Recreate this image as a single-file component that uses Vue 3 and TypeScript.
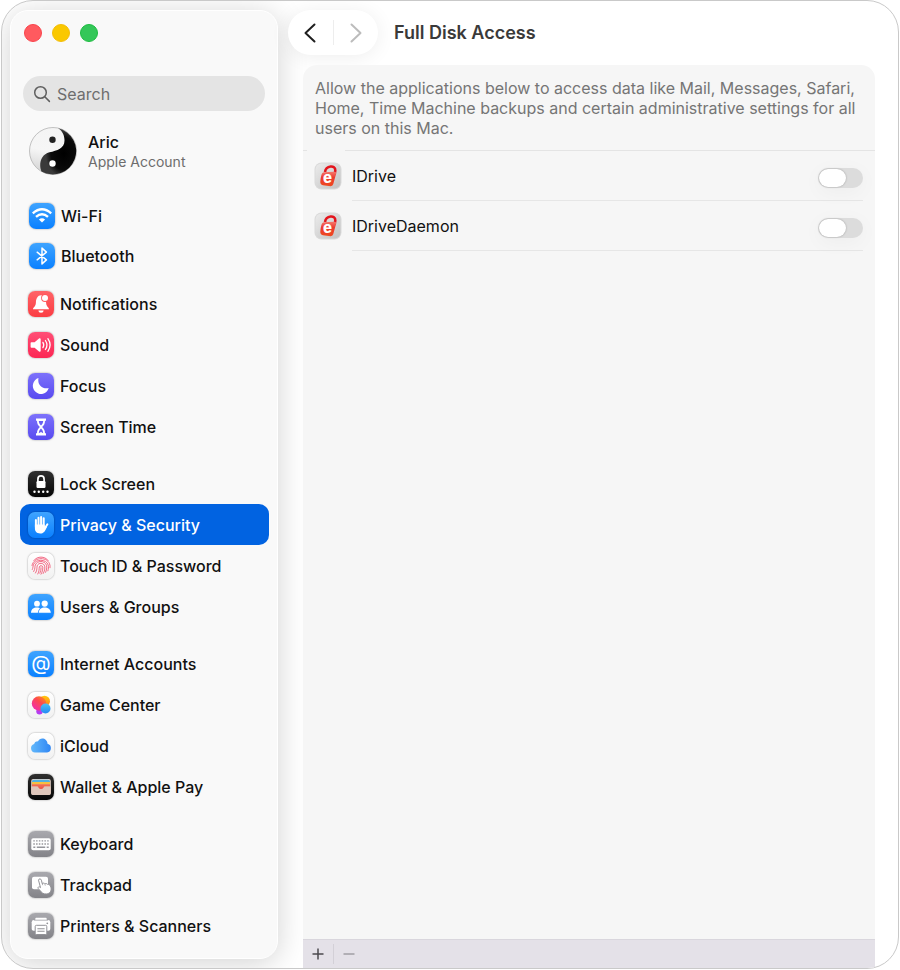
<script setup lang="ts">
import { ref } from 'vue'

interface NavItem {
  label: string
  icon: string
  tone: string
}

interface AppAccess {
  id: string
  name: string
  enabled: boolean
}

const glyphs: Record<string, string> = {
  wifi: `<g fill="none" stroke="#fff" stroke-width="2.4"><path d="M3.8 10.4Q13 2.2 22.2 10.4"/><path d="M7 13.8Q13 8.6 19 13.8"/></g><path d="M9.9 16.4Q13 14 16.1 16.4L13 19.6Z" fill="#fff"/>`,
  bluetooth: `<path d="M8.2 9.2L17.4 16.9L13 20.9V5.1L17.4 9.1L8.2 16.8" fill="none" stroke="#fff" stroke-width="1.5" stroke-linejoin="round" stroke-linecap="round"/>`,
  bell: `<path d="M5 18.3c-.3-1.700 2.700-2.500 2.900-6.600C8 7.500 9.800 4.300 13 4.300s5 3.200 5.100 7.400c.2 4.100 3.200 4.900 2.900 6.600z" fill="#fff"/><path d="M10.400 19.500h5.200a2.600 2.200 0 0 1-5.200 0z" fill="#fff"/><circle cx="17" cy="7" r="3.900" fill="#ff5a5c"/><circle cx="17" cy="7" r="3" fill="#fff"/>`,
  sound: `<path d="M3.400 10.200h3.200L11 6.600c.9-.7 1.700-.4 1.700.6v11.600c0 1-.8 1.300-1.700.6l-4.400-3.600H3.400c-.5 0-.8-.3-.8-.8v-4c0-.5.3-.8.8-.8z" fill="#fff"/><g fill="none" stroke="#fff" stroke-width="1.3" stroke-linecap="round"><path d="M14.900 10.400q1.700 2.600 0 5.200"/><path d="M17.400 8.500q3.100 4.500 0 9"/><path d="M19.900 6.700q4.400 6.300 0 12.600"/></g>`,
  moon: `<path d="M10.500 5.100c-1.300 6.200 3.200 11.200 10.200 10a8.100 8.100 0 1 1-10.200-10z" fill="#fff"/>`,
  hourglass: `<path d="M8 4.600h10v2.100h-1c0 3-1.100 4.600-2.900 6.300 1.800 1.700 2.900 3.300 2.900 6.300h1v2.100H8v-2.100h1c0-3 1.100-4.600 2.900-6.300C10.100 11.300 9 9.700 9 6.700H8z" fill="#fff"/><path d="M10.800 7h4.400c-.1 2-.8 3.200-2.200 4.500C11.600 10.200 10.900 9 10.800 7zM10.800 19.200c.1-2 .8-3.400 2.200-4.700 1.400 1.300 2.100 2.700 2.200 4.700l-2.200-1.300z" fill="#6a5ff2"/>`,
  lock: `<path d="M9.900 11V8.200a3.100 3.300 0 0 1 6.200 0V11" fill="none" stroke="#fff" stroke-width="1.700"/><rect x="8.500" y="10" width="9" height="7" rx="1.200" fill="#fff"/><g fill="#fff"><circle cx="6.500" cy="20.700" r="1.200"/><circle cx="10.800" cy="20.700" r="1.200"/><circle cx="15.200" cy="20.700" r="1.200"/><circle cx="19.500" cy="20.700" r="1.200"/></g>`,
  hand: `<g fill="none" stroke="#fff" stroke-width="2" stroke-linecap="round"><path d="M7.900 8.100v7M10.500 5.700v9M13.100 4.900v9M15.700 6.300v9M19.400 12.300l-2.900 4.500"/></g><path d="M6.900 12.500h9.800v2.400l1.600-1.200.6 1.200c-1.800 4.200-3.300 6.600-6.700 6.600-3.500 0-5.300-2-5.300-5.200z" fill="#fff"/>`,
  fingerprint: `<g fill="none" stroke="#f25b78" stroke-width=".9" stroke-linecap="round"><path d="M5.800 7.500C9.400 2.900 16.600 2.900 20.200 7.500M4 12.500C5.500 3.300 20.500 3.300 22 12.500v2.200M4.300 16.500c.8-1.700.6-3.200 1.100-4.700C7.400 5.800 18.300 5.700 20.200 12c.5 2 .3 4-.3 5.800M5.700 18.500c1.800-3 .9-4.700 1.600-6.500 1.700-4.700 9.600-4.700 11.200.3.600 2.500 0 5-.9 7M7.500 20c2.100-3.300 1.100-5.300 1.700-7.200 1.300-3.500 6.500-3.200 7.500.4.500 2.500-.2 5-1.500 7.300M9.800 21c1.600-2.800 1.200-5 1.500-7 .6-1.900 3.100-1.700 3.500.2.200 2.400-.6 4.900-1.800 7"/><path d="M13 14.700c.1 2-.3 3.700-1.200 5.400"/></g>`,
  users: `<circle cx="9" cy="9.700" r="2.900" fill="#fff"/><path d="M3 18.700c0-3.400 2.600-5.200 5.800-5.200s5.200 1.900 5.200 5.200z" fill="#fff"/><circle cx="16.700" cy="9.600" r="3.900" fill="#329dff"/><path d="M9.800 19.500c.2-4.600 3-7 6.900-7s6.800 2.600 6.900 7z" fill="#268fff"/><circle cx="16.700" cy="9.600" r="3.100" fill="#fff"/><path d="M10.700 18.700c.2-3.400 2.800-5.200 6-5.200s5.800 1.800 6.100 5.200z" fill="#fff"/>`,
  at: `<text x="13" y="19" text-anchor="middle" font-family="Inter, sans-serif" font-size="20" font-weight="400" fill="#fff">@</text>`,
  game: `<defs><linearGradient id="gc-a" x1="1" y1="0" x2="0.2" y2="1"><stop offset="0" stop-color="#ff9a10"/><stop offset="0.45" stop-color="#fd4a4e"/><stop offset="1" stop-color="#f02bb4"/></linearGradient><linearGradient id="gc-b" x1="0" y1="0" x2="0" y2="1"><stop offset="0" stop-color="#ffc90e"/><stop offset="1" stop-color="#ff7a1c"/></linearGradient><linearGradient id="gc-c" x1="0" y1="0" x2="0" y2="1"><stop offset="0" stop-color="#4bc0f2"/><stop offset="1" stop-color="#2488f5"/></linearGradient></defs><circle cx="16.500" cy="9.200" r="5.500" fill="url(#gc-b)"/><circle cx="11.500" cy="19.200" r="3.200" fill="#b43cf0"/><circle cx="11" cy="11.500" r="7.200" fill="url(#gc-a)"/><circle cx="17.500" cy="16.500" r="5" fill="url(#gc-c)"/>`,
  cloud: `<defs><linearGradient id="ic-a" x1="0" y1="0" x2="1" y2="0"><stop offset="0" stop-color="#62b8fb"/><stop offset="1" stop-color="#2f86f4"/></linearGradient></defs><path d="M7 19.500a4.300 4.300 0 0 1-.9-8.400 3.500 3.500 0 0 1 3.800-2.700c2.200-5 9.500-3.300 9.600 2.300a4.500 4.500 0 0 1-.4 8.800z" fill="url(#ic-a)"/>`,
  wallet: `<rect x="3.200" y="5" width="19.600" height="16" rx="2" fill="#e6d3c9"/><path d="M4 8V7.400a1.600 1.600 0 0 1 1.600-1.600h14.800A1.600 1.600 0 0 1 22 7.400V8z" fill="#4fb0e0"/><path d="M4 7.900h18v2.600H4z" fill="#f6bf3f"/><path d="M4 10.200h18v2.600H4z" fill="#f06a50"/><path d="M3.200 12.400h6.300c.8 0 1 .3 1.500 1 1.100 1.400 2.900 1.400 4 0 .5-.7.700-1 1.500-1h6.300V19a2 2 0 0 1-2 2H5.200a2 2 0 0 1-2-2z" fill="#ddc5ba"/><path d="M9.500 12.200h7l-1.700 2.200q-1.800 1.300-3.600 0z" fill="#ed5d4b"/>`,
  keyboard: `<rect x="3.300" y="7.200" width="19.400" height="12" rx="1.800" fill="#fff"/><g fill="none" stroke="#96969b" stroke-width="1.4"><path d="M5.300 9.900h15.400M5.300 13h15.400" stroke-dasharray="1.5 1.28"/><path d="M5.300 16.200h2M8.800 16.200h8.400M18.700 16.200h2"/></g>`,
  trackpad: `<rect x="4" y="4.800" width="16" height="12.400" rx="2" fill="#fff"/><path d="M10.500 8.200c.2-1.800 2.500-1.700 2.900 0l.8 3.300c1.700-.8 2.300-.3 2.600.2 1.400-.4 2.200 0 2.600.6 1.800-.2 3 .9 3.500 3.100.9 3.700-1 6.100-4.200 6.500-3.200.4-5-1-6.800-3.600-1-1.300-2.300-1.800-1.800-2.900.5-1 1.700-.6 2.400.2z" fill="#fff" stroke="#929297" stroke-width="1"/><path d="M14.200 11.400l.5 1.800M16.900 12l.4 1.600" stroke="#929297" stroke-width=".7"/>`,
  printer: `<path d="M7.300 8V5.800c0-.6.500-1.100 1.100-1.100h9.200c.6 0 1.100.5 1.100 1.100V8" fill="#fff"/><path d="M6 7h14a2.300 2.300 0 0 1 2.300 2.300v6.500c0 1.200-.8 1.900-2 1.900H5.700c-1.200 0-2-.7-2-1.900V9.300A2.300 2.300 0 0 1 6 7z" fill="#fff"/><path d="M6 7.200h14" stroke="#a1a1a6" stroke-width=".8"/><circle cx="19.300" cy="10.300" r=".9" fill="#929297"/><rect x="7.200" y="12.300" width="11.600" height="9.200" rx="1.200" fill="#fff" stroke="#929297" stroke-width="1"/><path d="M9.400 15.700h7.200M9.400 18.200h7.200" stroke="#929297" stroke-width="1.1"/>`,
}

const groups: NavItem[][] = [
  [
    { label: 'Wi-Fi', icon: 'wifi', tone: 'blue' },
    { label: 'Bluetooth', icon: 'bluetooth', tone: 'blue' },
  ],
  [
    { label: 'Notifications', icon: 'bell', tone: 'red' },
    { label: 'Sound', icon: 'sound', tone: 'pink' },
    { label: 'Focus', icon: 'moon', tone: 'indigo' },
    { label: 'Screen Time', icon: 'hourglass', tone: 'indigo' },
  ],
  [
    { label: 'Lock Screen', icon: 'lock', tone: 'black' },
    { label: 'Privacy & Security', icon: 'hand', tone: 'blue' },
    { label: 'Touch ID & Password', icon: 'fingerprint', tone: 'white' },
    { label: 'Users & Groups', icon: 'users', tone: 'blue' },
  ],
  [
    { label: 'Internet Accounts', icon: 'at', tone: 'blue' },
    { label: 'Game Center', icon: 'game', tone: 'white' },
    { label: 'iCloud', icon: 'cloud', tone: 'white' },
    { label: 'Wallet & Apple Pay', icon: 'wallet', tone: 'black' },
  ],
  [
    { label: 'Keyboard', icon: 'keyboard', tone: 'gray' },
    { label: 'Trackpad', icon: 'trackpad', tone: 'gray' },
    { label: 'Printers & Scanners', icon: 'printer', tone: 'gray' },
  ],
]

const selected = ref('Privacy & Security')
const query = ref('')
const apps = ref<AppAccess[]>([
  { id: 'idrive', name: 'IDrive', enabled: false },
  { id: 'idrive-daemon', name: 'IDriveDaemon', enabled: false },
])
</script>

<template>
  <div class="page">
    <div class="window">
      <aside class="sidebar">
        <div class="lights">
          <button class="light close" type="button" aria-label="Close"></button>
          <button class="light minimize" type="button" aria-label="Minimize"></button>
          <button class="light zoom" type="button" aria-label="Zoom"></button>
        </div>

        <label class="search">
          <svg viewBox="0 0 18 18" width="18" height="18" aria-hidden="true">
            <circle cx="7.5" cy="7.5" r="5.8" />
            <path d="M11.8 11.8L16.4 16.4" />
          </svg>
          <input v-model="query" type="text" placeholder="Search" aria-label="Search" />
        </label>

        <a class="account" href="#account">
          <svg class="avatar" viewBox="0 0 48 48" width="48" height="48" aria-hidden="true">
            <defs>
              <linearGradient id="yin-light" x1="0.5" y1="0" x2="0.3" y2="1">
                <stop offset="0" stop-color="#f4f4f4" />
                <stop offset="0.5" stop-color="#f6f6f6" />
                <stop offset="1" stop-color="#d2d2d2" />
              </linearGradient>
              <radialGradient id="yin-dark" cx="0.65" cy="0.55" r="0.5">
                <stop offset="0" stop-color="#000" />
                <stop offset="0.7" stop-color="#0a0a0a" />
                <stop offset="1" stop-color="#3a3a3a" />
              </radialGradient>
            </defs>
            <circle cx="24" cy="24" r="23.5" fill="url(#yin-light)" stroke="#a9a9a9" stroke-width="0.7" />
            <path
              d="M29 1.2A23.4 23.4 0 1 1 12.500 44.500C9.500 38 11.500 27.500 20.500 25.300C28 23.600 35.500 21.500 35.500 13.500C35.500 8 33.500 4 29 1.200Z"
              fill="url(#yin-dark)"
            />
            <circle cx="23.5" cy="12.8" r="3.2" fill="#222" />
            <circle cx="23.5" cy="36.5" r="3.2" fill="#fff" />
          </svg>
          <span class="account-text">
            <span class="account-name">Aric</span>
            <span class="account-kind">Apple Account</span>
          </span>
        </a>

        <nav class="nav" aria-label="Settings">
          <ul v-for="(group, index) in groups" :key="index" class="group">
            <li v-for="item in group" :key="item.label">
              <a
                href="#"
                class="item"
                :class="{ selected: item.label === selected }"
                :aria-current="item.label === selected ? 'page' : undefined"
                @click.prevent="selected = item.label"
              >
                <span class="tile" :class="item.tone">
                  <svg viewBox="0 0 26 26" width="26" height="26" aria-hidden="true" v-html="glyphs[item.icon]"></svg>
                </span>
                <span>{{ item.label }}</span>
              </a>
            </li>
          </ul>
        </nav>
      </aside>

      <main class="content">
        <header class="toolbar">
          <div class="history">
            <button type="button" class="step" aria-label="Back">
              <svg viewBox="0 0 12 20" width="12" height="20"><path d="M10.5 1.5L1.5 10L10.5 18.5" /></svg>
            </button>
            <span class="history-divider"></span>
            <button type="button" class="step forward" aria-label="Forward" disabled>
              <svg viewBox="0 0 12 20" width="12" height="20"><path d="M1.5 1.5L10.5 10L1.5 18.5" /></svg>
            </button>
          </div>
          <h1>Full Disk Access</h1>
        </header>

        <section class="panel">
          <p class="intro">
            Allow the applications below to access data like Mail, Messages, Safari, Home, Time Machine backups and
            certain administrative settings for all users on this Mac.
          </p>
          <ul class="apps">
            <li v-for="app in apps" :key="app.id" class="app">
              <svg class="app-icon" viewBox="0 0 28 28" width="28" height="28" aria-hidden="true">
                <defs>
                  <linearGradient :id="`${app.id}-plate`" x1="0" y1="0" x2="1" y2="1">
                    <stop offset="0" stop-color="#ebebeb" />
                    <stop offset="1" stop-color="#c2c2c2" />
                  </linearGradient>
                  <linearGradient :id="`${app.id}-lock`" x1="0" y1="0" x2="0" y2="1">
                    <stop offset="0" stop-color="#f4786c" />
                    <stop offset="0.4" stop-color="#ec3a30" />
                    <stop offset="1" stop-color="#ee4a20" />
                  </linearGradient>
                </defs>
                <rect x="0.5" y="0.5" width="27" height="27" rx="7" fill="#dadada" />
                <rect x="1.5" y="1.5" width="25" height="25" rx="6" :fill="`url(#${app.id}-plate)`" />
                <path d="M11 10C12 3.300 21.500 2.600 21.300 8.500L20.600 13" fill="none" stroke="#e3141c" stroke-width="2.6" />
                <path
                  d="M9.800 10.200L20.500 9.800Q22.500 9.800 22.100 11.800L19.300 22Q18.800 24 16.800 24.300L9 23.200Q6 22.500 6.300 19.500Q6.900 13.500 8 11.600Q8.600 10.400 9.800 10.200Z"
                  :fill="`url(#${app.id}-lock)`"
                />
                <text
                  x="13.5"
                  y="20.7"
                  text-anchor="middle"
                  font-family="Inter, sans-serif"
                  font-size="15"
                  font-weight="800"
                  fill="#fff"
                >e</text>
              </svg>
              <div class="app-line">
                <label :for="app.id">{{ app.name }}</label>
                <input :id="app.id" v-model="app.enabled" class="switch" type="checkbox" role="switch" />
              </div>
            </li>
          </ul>
          <footer class="actions">
            <button type="button" aria-label="Add application">
              <svg viewBox="0 0 12 12" width="12" height="12"><path d="M6 0.5V11.5M0.5 6H11.5" /></svg>
            </button>
            <span class="actions-divider"></span>
            <button type="button" aria-label="Remove application" disabled>
              <svg viewBox="0 0 12 12" width="12" height="12"><path d="M0.5 6H11.5" /></svg>
            </button>
          </footer>
        </section>
      </main>
    </div>
  </div>
</template>

<style>
body {
  margin: 0;
  background: #fff;
}
</style>

<style scoped>
* {
  box-sizing: border-box;
}

button {
  padding: 0;
  border: 0;
  background: none;
}

ul {
  margin: 0;
  padding: 0;
  list-style: none;
}

a {
  color: inherit;
  text-decoration: none;
}

.page {
  display: flex;
  min-height: 100vh;
  padding: 0 1px 1px 1px;
  font-family: Inter, "Liberation Sans", sans-serif;
  font-size: 16px;
  color: #111;
}

.window {
  display: flex;
  flex: 1;
  border: 1px solid #c9c9c9;
  border-radius: 32px;
  overflow: hidden;
  background: #fff;
}

.sidebar {
  flex: none;
  width: 268px;
  margin: 9px 0 9px 8px;
  padding: 0 8px 12px 9px;
  border: 1px solid #fff;
  border-radius: 18px;
  background: #f9f9f9;
  box-shadow: 0 4px 30px rgba(0, 0, 0, 0.18);
}

.lights {
  display: flex;
  gap: 10px;
  padding: 13px 0 0 4px;
}

.light {
  width: 18px;
  height: 18px;
  border: 1px solid;
  border-radius: 50%;
}

.close {
  border-color: #f9444c;
  background: #ff5a5f;
}

.minimize {
  border-color: #f3bd0a;
  background: #fac800;
}

.zoom {
  border-color: #1dbb41;
  background: #34c759;
}

.search {
  display: flex;
  align-items: center;
  gap: 6px;
  height: 35px;
  margin: 34px 4px 0 3px;
  padding: 0 10px;
  border-radius: 18px;
  background: #e4e4e4;
}

.search svg {
  flex: none;
  fill: none;
  stroke: #5f5f5f;
  stroke-width: 1.5;
  stroke-linecap: round;
}

.search input {
  flex: 1;
  min-width: 0;
  padding: 0;
  border: 0;
  outline: 0;
  background: none;
  font: inherit;
  color: #111;
}

.search input::placeholder {
  color: #6e6e6e;
  opacity: 1;
}

.account {
  display: flex;
  align-items: center;
  gap: 11px;
  margin-top: 16px;
  padding-left: 9px;
}

.account-text {
  display: flex;
  flex-direction: column;
  padding-top: 2px;
}

.account-name {
  font-weight: 500;
  line-height: 20px;
}

.account-kind {
  font-size: 14px;
  line-height: 20px;
  color: #6d6d6d;
}

.nav {
  display: flex;
  flex-direction: column;
  gap: 16px;
  margin-top: 21px;
  font-weight: 500;
}

.group:first-child {
  margin-bottom: -9px;
  padding-left: 1px;
}

.item {
  display: flex;
  align-items: center;
  gap: 6px;
  height: 41px;
  padding-left: 8px;
  border-radius: 10px;
}

.group:first-child .item {
  height: 40px;
}

.item.selected {
  background: #0163e1;
  color: #fff;
}

.tile {
  flex: none;
  width: 26px;
  height: 26px;
  border-radius: 7px;
  box-shadow: 0 0 2px rgba(0, 0, 0, 0.4);
}

.tile svg {
  display: block;
}

.blue {
  background: linear-gradient(#3fa4ff, #0a80ff);
}

.red {
  background: linear-gradient(#ff6467, #fb3d43);
}

.pink {
  background: linear-gradient(#ff4f76, #fc2653);
}

.indigo {
  background: linear-gradient(#7d72fb, #584af0);
}

.black {
  background: linear-gradient(#303030, #050505);
}

.white {
  background: linear-gradient(#ffffff, #f1f1f1);
}

.gray {
  background: linear-gradient(#a9a9ae, #838388);
}

.content {
  display: flex;
  flex: 1;
  flex-direction: column;
  min-width: 0;
}

.toolbar {
  display: flex;
  align-items: center;
  gap: 16px;
  padding: 9px 23px 10px 10px;
}

.history {
  display: flex;
  align-items: center;
  width: 90px;
  height: 45px;
  border-radius: 23px;
  background: #fff;
  box-shadow: 0 2px 20px rgba(0, 0, 0, 0.07);
}

.step {
  display: flex;
  flex: 1;
  align-items: center;
  justify-content: center;
  height: 45px;
}

.step svg {
  fill: none;
  stroke: #1f1f1f;
  stroke-width: 2;
  stroke-linecap: round;
  stroke-linejoin: round;
}

.forward svg {
  stroke: #bcbcbc;
}

.history-divider {
  width: 1px;
  height: 25px;
  background: #ededed;
}

h1 {
  margin: 0;
  font-size: 18px;
  font-weight: 600;
  line-height: 24px;
  color: #3a3a3a;
}

.panel {
  display: flex;
  flex: 1;
  flex-direction: column;
  margin: 0 23px 0 25px;
  border-radius: 14px 14px 0 0;
  background: #f6f6f6;
}

.intro {
  margin: 0;
  padding: 13px 12px 12px;
  line-height: 20px;
  color: #757575;
}

.apps {
  flex: 1;
  padding-top: 1px;
  background: linear-gradient(90deg, #e4e4e4 4px, transparent 4px 42px, #e4e4e4 42px) top / 100% 1px no-repeat;
}

.app {
  display: flex;
  align-items: center;
  gap: 10px;
  height: 50px;
  padding: 0 12px 0 11px;
}

.app-icon {
  flex: none;
}

.app-line {
  display: flex;
  flex: 1;
  align-items: center;
  justify-content: space-between;
  height: 50px;
  border-bottom: 1px solid #e6e6e6;
}

.switch {
  display: flex;
  align-items: center;
  width: 45px;
  height: 20px;
  margin: 5px 0 0;
  padding: 1px;
  border-radius: 10px;
  appearance: none;
  background: #dcdcdc;
  box-shadow: 0 4px 20px rgba(0, 0, 0, 0.04);
}

.switch::before {
  content: "";
  width: 27px;
  height: 18px;
  border-radius: 9px;
  background: #fff;
  box-shadow: 0 0 2px rgba(0, 0, 0, 0.3);
}

.switch:checked {
  justify-content: flex-end;
  background: #0a80ff;
}

.actions {
  display: flex;
  align-items: center;
  height: 29px;
  border-top: 1px solid #d9d6dd;
  background: #e4e1e8;
}

.actions button {
  display: flex;
  align-items: center;
  justify-content: center;
  width: 30px;
  height: 28px;
}

.actions svg {
  stroke: #4b494e;
  stroke-width: 1.5;
}

.actions button:disabled svg {
  stroke: #a19ea4;
}

.actions-divider {
  width: 1px;
  height: 20px;
  background: #d3d0d7;
}
</style>
